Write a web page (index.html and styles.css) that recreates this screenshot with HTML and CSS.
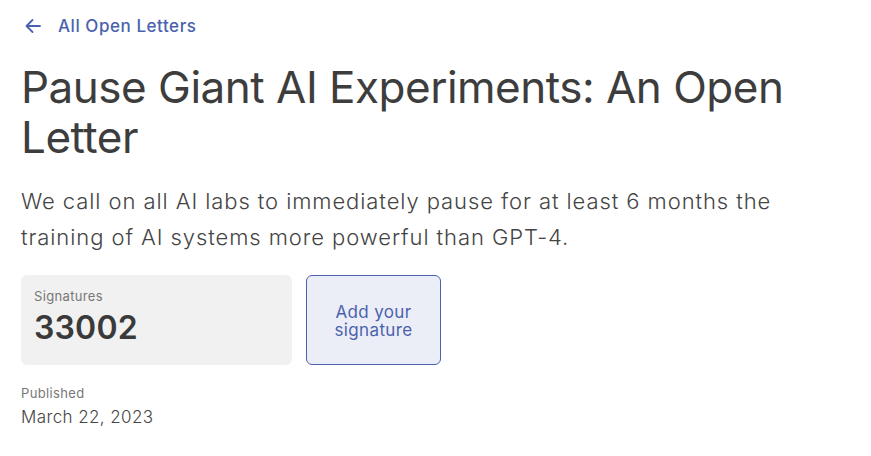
FILE: index.html
```html
<!DOCTYPE html>
<html>
<head>
<meta charset="utf-8">
<link rel="stylesheet" href="styles.css">
</head>
<body>
<main class="page">
  <a class="back" href="#">
    <svg class="back-icon" width="18" height="18" viewBox="0 0 18 18" fill="none" stroke="currentColor" stroke-width="1.8" stroke-linecap="round" stroke-linejoin="round"><path d="M16 9H2.5M8.5 3L2.5 9l6 6"/></svg>
    <span>All Open Letters</span>
  </a>
  <h1 class="title">Pause Giant AI Experiments: An Open Letter</h1>
  <p class="lead">We call on all AI labs to immediately pause for at least 6 months the training of AI systems more powerful than GPT-4.</p>
  <div class="stats">
    <div class="count-card">
      <div class="label">Signatures</div>
      <div class="count">33002</div>
    </div>
    <a class="sign-btn" href="#">Add your signature</a>
  </div>
  <div class="published">
    <div class="label">Published</div>
    <div class="date">March 22, 2023</div>
  </div>
</main>
</body>
</html>
```
FILE: styles.css
```css
* { box-sizing: border-box; }
html, body { margin: 0; padding: 0; background: #fff; }
body { font-family: Inter, "Noto Sans", sans-serif; color: #3f3f3f; }
.page { padding: 13px 21px 0 21px; }
.back { display: flex; align-items: center; gap: 16px; color: #4a62ad; text-decoration: none; font-size: 17px; font-weight: 500; letter-spacing: 0.55px; height: 26px; }
.back-icon { margin-left: 3px; }
.title { margin: 23px 0 0 0; font-size: 44px; font-weight: 400; line-height: 50px; letter-spacing: -0.5px; color: #3d3d3d; max-width: 800px; }
.lead { margin: 21px 0 0 0; font-size: 22px; font-weight: 300; line-height: 36px; letter-spacing: 0.92px; color: #444; max-width: 800px; }
.stats { display: flex; gap: 14px; margin-top: 20px; }
.count-card { width: 271px; height: 90px; background: #f1f1f1; border-radius: 6px; padding: 13px 13px 0 13px; }
.label { font-size: 13px; color: #777; line-height: 16px; letter-spacing: 0.35px; }
.count { font-size: 32px; font-weight: 600; color: #3a3a3a; margin-top: 5px; line-height: 38px; letter-spacing: 0.2px; }
.sign-btn { width: 135px; height: 90px; display: flex; align-items: center; justify-content: center; text-align: center; background: #eceef7; border: 1px solid #4a62ad; border-radius: 6px; color: #4a62ad; text-decoration: none; font-size: 17px; line-height: 18px; letter-spacing: 0.35px; padding: 1px 16px 0; }
.published { margin-top: 20px; }
.date { font-size: 17px; font-weight: 300; margin-top: 6px; color: #444; letter-spacing: 0.4px; }
```
